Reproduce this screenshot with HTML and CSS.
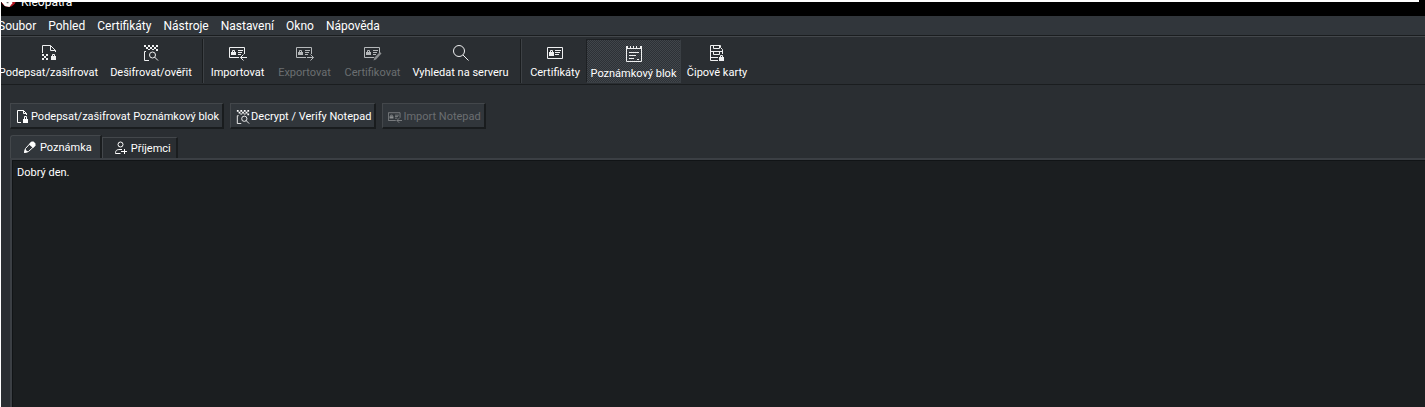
FILE: index.html
```
<!DOCTYPE html>
<html lang="cs">
<head>
<meta charset="utf-8">
<title>Kleopatra</title>
<link rel="stylesheet" href="styles.css">
</head>
<body>
<svg class="defs" aria-hidden="true">
  <symbol id="sign" viewBox="0 0 16 16"><path d="M1.500 8V.5h8l5 5V7M9.500.5v5h5" fill="none" stroke="currentColor"/><path d="M1 9h2v2H1zM5 9h2v2H5zM3 11h2v2H3zM1 13h2v2H1zM5 13h2v2H5zM10 11h5v4h-5z" fill="currentColor"/><path d="M11.500 11V9.500h2V11" fill="none" stroke="currentColor"/></symbol>
  <symbol id="signsmall" viewBox="0 0 14 14"><path d="M5 12.500H1.500V.5h6l3 3V5M7.500.5v3h3" fill="none" stroke="currentColor"/><path d="M7 9h5v4H7z" fill="currentColor"/><path d="M8.500 9V6.500h2V9" fill="none" stroke="currentColor"/></symbol>
  <symbol id="verify" viewBox="0 0 16 16"><path d="M1 0h2v2H1zM5 0h2v2H5zM9 0h2v2H9zM13 0h2v2h-2zM3 2h2v2H3zM7 2h2v2H7zM11 2h2v2h-2zM5 4h2v1H5zM9 4h2v1H9zM13 4h2v2h-2z" fill="currentColor"/><path d="M3 6.500H1.500v9H6" fill="none" stroke="currentColor"/><circle cx="9.500" cy="10" r="3" fill="none" stroke="currentColor"/><path d="M11.500 12l3.500 3.500" stroke="currentColor"/></symbol>
  <symbol id="card" viewBox="0 0 16 16"><path d="M.5 2.500h15v11H.5z" fill="none" stroke="currentColor"/><path d="M2 7h5v4H2zM8 5h6v1H8zM8 7h5v1H8zM8 9h4v1H8z" fill="currentColor"/><path d="M3.500 7V5.500h2V7" fill="none" stroke="currentColor"/></symbol>
  <symbol id="cardbase" viewBox="0 0 18 16"><path d="M10 12.500H.5v-10h15V9" fill="none" stroke="currentColor"/><path d="M2 7h5v3H2zM9 5h5v1H9zM9 7h4v1H9zM9 9h3v1H9z" fill="currentColor"/><path d="M3.500 7V5.500h2V7" fill="none" stroke="currentColor"/></symbol>
  <symbol id="import" viewBox="0 0 18 16"><use href="#cardbase" width="18" height="16"/><path d="M18 12.500h-6.500M14.500 9.500l-3 3 3 3" fill="none" stroke="currentColor"/></symbol>
  <symbol id="export" viewBox="0 0 18 16"><use href="#cardbase" width="18" height="16"/><path d="M11 12.500h6.500M14.500 9.500l3 3-3 3" fill="none" stroke="currentColor"/></symbol>
  <symbol id="certify" viewBox="0 0 18 16"><use href="#cardbase" width="18" height="16"/><path d="M9.500 15.500l1-3L16 7l1.500 1.500-5.500 6z" fill="#8b8e90"/></symbol>
  <symbol id="search" viewBox="0 0 16 16"><circle cx="6" cy="6" r="5.500" fill="none" stroke="currentColor"/><path d="M10 10l5.500 5.500" stroke="currentColor"/></symbol>
  <symbol id="note" viewBox="0 0 16 16"><path d="M.5 1v14.500h15V1M1 2.500h14M3 6.500h10M3 9.500h7M3 12.500h5M11 13.500h2" fill="none" stroke="currentColor"/><path d="M0 0h2v3H0zM4 0h1v2H4zM7 0h1v2H7zM10 0h1v2h-1zM14 0h2v3h-2z" fill="currentColor"/></symbol>
  <symbol id="smart" viewBox="0 0 16 16"><path d="M1.500.5h10v2l2 2V9M1.500.5v15H9M4.500.5v3h6v-3M1.500 6.500h12M4.500 6.500v3h6v-3M1.500 12.500H9" fill="none" stroke="currentColor"/><path d="M10 12h5v4h-5z" fill="currentColor"/><path d="M11.500 12v-1.500h2V12" fill="none" stroke="currentColor"/></symbol>
  <symbol id="pencil" viewBox="0 0 16 16"><path d="M2.500 12.500l1-4 6-6.500 3.500 3.500-6.500 6z" fill="none" stroke="currentColor"/><path d="M7 4.500L9.500 1.500h2l2 2v2L11 8zM2 13l1-4 3 3z" fill="currentColor"/></symbol>
  <symbol id="person" viewBox="0 0 16 16"><circle cx="7.500" cy="3.500" r="2.500" fill="none" stroke="currentColor"/><path d="M7.500 12.500h-5c0-3 1-4 4.500-4h2M8 10.500h6M11.500 8v5" fill="none" stroke="currentColor"/></symbol>
</svg>
<div class="window">
  <header class="titlebar">
    <div class="caption">
      <svg class="logo" viewBox="0 0 16 16" aria-hidden="true"><circle cx="8" cy="8" r="8" fill="#b31520"/><path d="M1 8h11v4l-3 4-5-1-3-4z" fill="#fff"/><path d="M6 8h2v4H6z" fill="#777"/></svg>
      <span>Kleopatra</span>
    </div>
  </header>
  <nav class="menubar">
    <button>Soubor</button><button>Pohled</button><button>Certifikáty</button><button>Nástroje</button><button>Nastavení</button><button>Okno</button><button>Nápověda</button>
  </nav>
  <div class="toolbar" role="toolbar">
    <button class="tool"><svg class="icon"><use href="#sign"/></svg>Podepsat/zašifrovat</button>
    <button class="tool"><svg class="icon"><use href="#verify"/></svg>Dešifrovat/ověřit</button>
    <span class="separator"></span>
    <button class="tool"><svg class="icon wide"><use href="#import"/></svg>Importovat</button>
    <button class="tool" disabled><svg class="icon wide"><use href="#export"/></svg>Exportovat</button>
    <button class="tool" disabled><svg class="icon wide"><use href="#certify"/></svg>Certifikovat</button>
    <button class="tool"><svg class="icon"><use href="#search"/></svg>Vyhledat na serveru</button>
    <span class="separator"></span>
    <button class="tool"><svg class="icon"><use href="#card"/></svg>Certifikáty</button>
    <button class="tool checked" aria-pressed="true"><svg class="icon"><use href="#note"/></svg>Poznámkový blok</button>
    <button class="tool"><svg class="icon"><use href="#smart"/></svg>Čipové karty</button>
  </div>
  <main class="content">
    <div class="actions">
      <button class="action"><svg class="small"><use href="#signsmall"/></svg>Podepsat/zašifrovat Poznámkový blok</button>
      <button class="action"><svg class="small"><use href="#verify"/></svg>Decrypt / Verify Notepad</button>
      <button class="action" disabled><svg class="small"><use href="#import"/></svg>Import Notepad</button>
    </div>
    <div class="tabs" role="tablist">
      <button class="tab selected" role="tab" aria-selected="true"><svg class="tabicon"><use href="#pencil"/></svg>Poznámka</button>
      <button class="tab" role="tab" aria-selected="false"><svg class="tabicon"><use href="#person"/></svg>Příjemci</button>
    </div>
    <textarea class="editor" aria-label="Poznámka" spellcheck="false">Dobrý den.</textarea>
  </main>
</div>
</body>
</html>
```
FILE: styles.css
```
* { box-sizing: border-box; }
body { margin: 0; background: #fff; color: #fff; font: 11px/16px Roboto, "Noto Sans", sans-serif; }
button, textarea { margin: 0; padding: 0; border: 0; background: none; color: inherit; font: inherit; white-space: nowrap; }
.defs { display: none; }
.window { display: flex; flex-direction: column; height: 100vh; margin-left: 1px; overflow: hidden; background: #2a2e32; }
.titlebar { height: 16px; flex: none; overflow: hidden; background: linear-gradient(90deg, #fff calc(100% - 6px), #000 0) top / 100% 2px no-repeat #000; font-size: 12px; }
.caption { display: flex; gap: 5px; height: 14px; margin-top: 2px; overflow: hidden; align-items: flex-end; line-height: 28px; }
.logo { width: 15px; height: 15px; margin-bottom: 9px; }
.menubar { display: flex; flex: none; gap: 12px; height: 20px; margin-left: -3px; overflow: hidden; background: #31363b; border-bottom: 1px solid #1a1d1f; font-size: 12px; line-height: 20px; }
.toolbar { display: grid; flex: none; grid-template-columns: 111px 94px 9px 61px 73px 63px 113px 7px 62px 95px 72px; height: 49px; margin-left: -8px; padding: 2px 0 1px; border-top: 1px solid #43474b; border-bottom: 1px solid #1a1d1f; }
.tool { display: flex; flex-direction: column; align-items: center; gap: 4px; padding-top: 6px; }
.tool:disabled, .action:disabled { color: #6b6e71; }
.tool:disabled .icon { color: #b5b8ba; }
.icon { width: 16px; height: 16px; color: #eff0f1; }
.wide { width: 18px; }
.checked { border: 1px solid #1e2124; border-right-color: #3a3f44; border-bottom-color: #3a3f44; background: repeating-conic-gradient(#41464b 0 25%, #2d3136 0 50%) 0 0 / 2px 2px; }
.separator { width: 2px; margin: 0 auto; border-left: 1px solid #1a1d1f; border-right: 1px solid #3d4145; }
.content { display: flex; flex: 1; flex-direction: column; min-height: 0; padding: 18px 0 0 9px; }
.actions { display: flex; gap: 6px; margin-bottom: 6px; }
.action { display: flex; align-items: center; gap: 1px; height: 26px; padding: 3px 3px 0 5px; background: #31363b; border: 1px solid #43474b; border-right: 2px solid #191c1e; border-bottom: 2px solid #191c1e; }
.small { width: 14px; height: 14px; }
.action:disabled .small { color: #8b8e90; }
.tabs { display: flex; align-items: flex-end; height: 23px; flex: none; }
.tab { display: flex; align-items: center; gap: 2px; height: 21px; padding: 2px 5px 0 10px; border: 1px solid #43474b; border-bottom: 0; border-right: 2px solid #1a1d1f; background: #2a2e32; }
.selected { height: 23px; padding: 2px 8px 0 11px; background: #31363b; border-radius: 3px 0 0 0; }
.tabicon { width: 16px; height: 16px; }
.editor { flex: 1; min-height: 0; padding: 5px; border-top: 2px solid #3b3f44; border-left: 2px solid #3b3f44; background: #1b1e20; resize: none; outline: 0; box-shadow: inset 1px 1px #111416; }
```
